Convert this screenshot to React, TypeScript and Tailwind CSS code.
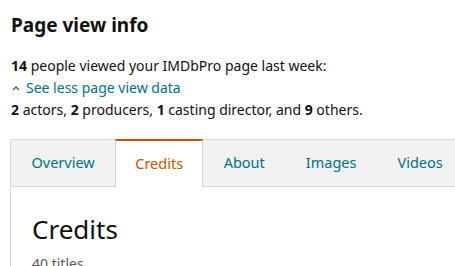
import React from "react";

export default function App() {
  const tabs = ["Overview", "Credits", "About", "Images", "Videos"];
  return (
    <div
      className="w-[455px] h-[266px] overflow-hidden bg-white text-[#0f1111]"
      style={{ fontFamily: '"Noto Sans", Arial, sans-serif' }}
    >
      <div className="pl-[11px] pt-[11px]">
        <h2 className="text-[19px] leading-[28px] font-bold">Page view info</h2>
        <div className="mt-[16px] text-[14px] leading-[22px]">
          <p>
            <b>14</b> people viewed your IMDbPro page last week:
          </p>
          <p className="flex items-center text-[#007185]">
            <svg width="8" height="6" viewBox="0 0 8 6" className="mr-[6px] ml-[1px]">
              <path d="M1 5 L4 2 L7 5" fill="none" stroke="#555" strokeWidth="1.4" />
            </svg>
            See less page view data
          </p>
          <p>
            <b>2</b> actors, <b>2</b> producers, <b>1</b> casting director, and <b>9</b> others.
          </p>
        </div>
      </div>
      <div className="ml-[10px] mt-[18px] border-l border-[#d5d9d9]">
        <div className="flex h-[48px]">
          {tabs.map((t, i) =>
            i === 1 ? (
              <div
                key={t}
                className="flex shrink-0 items-center justify-center px-[19px] bg-white border-t-2 border-t-[#c45500] border-x border-x-[#d5d9d9] text-[#c45500] text-[14.5px]"
              >
                {t}
              </div>
            ) : (
              <div
                key={t}
                className="flex shrink-0 items-center justify-center px-[20.5px] bg-[#f2f2f2] border-t border-b border-[#d5d9d9] text-[#007185] text-[14.5px]"
              >
                {t}
              </div>
            )
          )}
          <div className="flex-1 bg-[#f2f2f2] border-t border-b border-[#d5d9d9]" />
        </div>
        <div className="pl-[21px] pt-[25px]">
          <h3 className="text-[26px] leading-[34px]">Credits</h3>
          <p className="mt-[8px] text-[14px] leading-[20px] text-[#565959]">40 titles</p>
        </div>
      </div>
    </div>
  );
}
